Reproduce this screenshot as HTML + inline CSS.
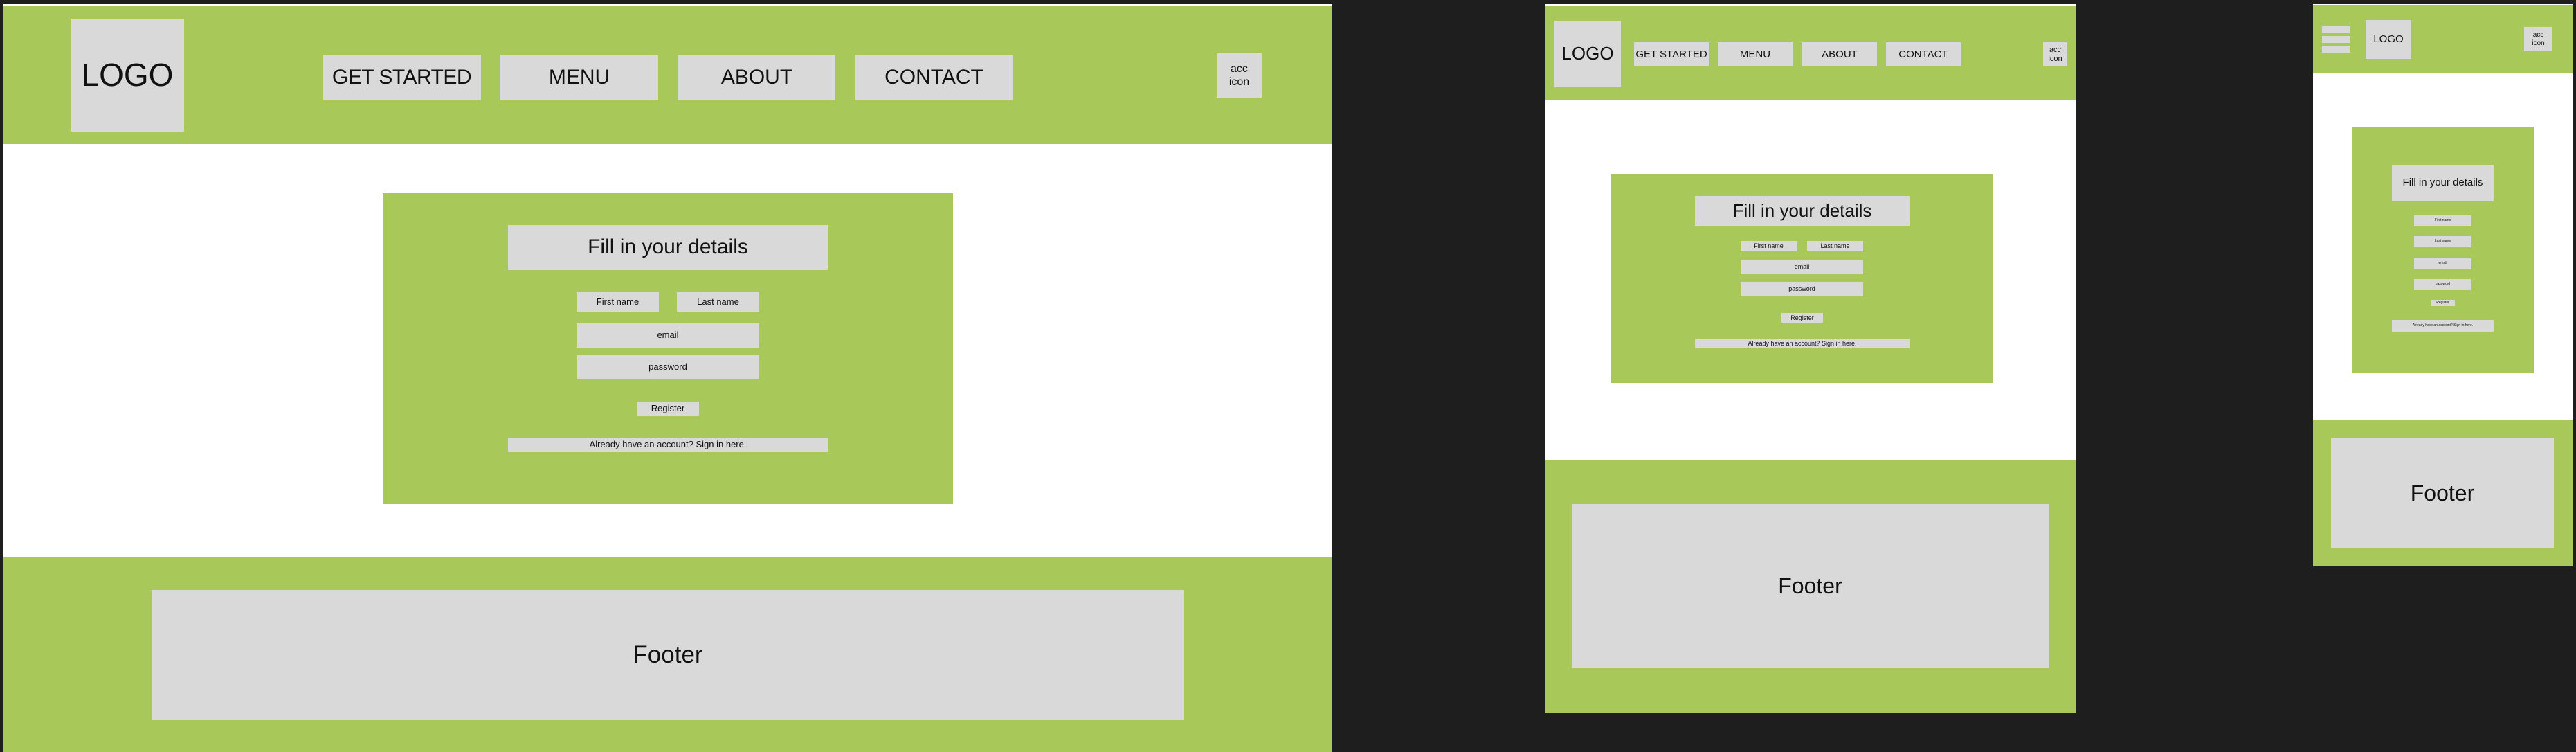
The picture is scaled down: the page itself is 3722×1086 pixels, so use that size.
<!DOCTYPE html>
<html><head><meta charset="utf-8"><style>
*{margin:0;padding:0;box-sizing:border-box}
body{width:3722px;height:1086px;background:#1e1e1e;position:relative;overflow:hidden;font-family:"Liberation Sans",sans-serif;color:#111}
.a{position:absolute}
.g{background:#a8c95a}
.w{background:#fff}
.b{position:absolute;background:#d9d9d9;display:flex;align-items:center;justify-content:center;text-align:center;line-height:1.15;white-space:nowrap}
</style></head><body>
<!-- Frame 1 -->
<div class="a w" style="left:5px;top:6px;width:1920px;height:1080px"></div>
<div class="a g" style="left:5px;top:8px;width:1920px;height:200px"></div>
<div class="b" style="left:102px;top:27px;width:164px;height:163px;font-size:46px">LOGO</div>
<div class="b" style="left:466px;top:80px;width:229px;height:65px;font-size:30px;letter-spacing:-0.5px">GET STARTED</div>
<div class="b" style="left:723px;top:80px;width:228px;height:65px;font-size:30px">MENU</div>
<div class="b" style="left:980px;top:80px;width:227px;height:65px;font-size:30px">ABOUT</div>
<div class="b" style="left:1236px;top:80px;width:227px;height:65px;font-size:30px">CONTACT</div>
<div class="b" style="left:1758px;top:77px;width:65px;height:65px;font-size:16px">acc<br>icon</div>
<div class="a g" style="left:553px;top:279px;width:824px;height:449px"></div>
<div class="b" style="left:734px;top:325px;width:462px;height:65px;font-size:30px">Fill in your details</div>
<div class="b" style="left:833px;top:422px;width:119px;height:29px;font-size:13px">First name</div>
<div class="b" style="left:978px;top:422px;width:119px;height:29px;font-size:13px">Last name</div>
<div class="b" style="left:833px;top:467px;width:264px;height:35px;font-size:13px">email</div>
<div class="b" style="left:833px;top:513px;width:264px;height:35px;font-size:13px">password</div>
<div class="b" style="left:920px;top:580px;width:90px;height:21px;font-size:13px">Register</div>
<div class="b" style="left:734px;top:632px;width:462px;height:21px;font-size:13px">Already have an account? Sign in here.</div>
<div class="a g" style="left:5px;top:805px;width:1920px;height:281px"></div>
<div class="b" style="left:219px;top:852px;width:1492px;height:188px;font-size:35px">Footer</div>

<!-- Frame 2 -->
<div class="a w" style="left:2232px;top:6px;width:768px;height:1024px"></div>
<div class="a g" style="left:2232px;top:8px;width:768px;height:137px"></div>
<div class="b" style="left:2246px;top:30px;width:96px;height:96px;font-size:26px">LOGO</div>
<div class="b" style="left:2361px;top:61px;width:108px;height:35px;font-size:15px">GET STARTED</div>
<div class="b" style="left:2482px;top:61px;width:108px;height:35px;font-size:15px">MENU</div>
<div class="b" style="left:2604px;top:61px;width:108px;height:35px;font-size:15px">ABOUT</div>
<div class="b" style="left:2725px;top:61px;width:108px;height:35px;font-size:15px">CONTACT</div>
<div class="b" style="left:2952px;top:61px;width:35px;height:35px;font-size:11px">acc<br>icon</div>
<div class="a g" style="left:2328px;top:252px;width:552px;height:301px"></div>
<div class="b" style="left:2449px;top:283px;width:310px;height:43px;font-size:26px">Fill in your details</div>
<div class="b" style="left:2515px;top:348px;width:81px;height:15px;font-size:9px">First name</div>
<div class="b" style="left:2611px;top:348px;width:81px;height:15px;font-size:9px">Last name</div>
<div class="b" style="left:2515px;top:375px;width:177px;height:21px;font-size:9px">email</div>
<div class="b" style="left:2515px;top:407px;width:177px;height:21px;font-size:9px">password</div>
<div class="b" style="left:2574px;top:452px;width:60px;height:14px;font-size:9px">Register</div>
<div class="b" style="left:2449px;top:489px;width:310px;height:14px;font-size:9px">Already have an account? Sign in here.</div>
<div class="a g" style="left:2232px;top:664px;width:768px;height:366px"></div>
<div class="b" style="left:2271px;top:728px;width:689px;height:237px;font-size:32px">Footer</div>

<!-- Frame 3 -->
<div class="a w" style="left:3342px;top:6px;width:375px;height:812px"></div>
<div class="a g" style="left:3342px;top:7px;width:375px;height:99px"></div>
<div class="a" style="left:3355px;top:38px;width:41px;height:10px;background:#d9d9d9"></div>
<div class="a" style="left:3355px;top:52px;width:41px;height:10px;background:#d9d9d9"></div>
<div class="a" style="left:3355px;top:66px;width:41px;height:10px;background:#d9d9d9"></div>
<div class="b" style="left:3418px;top:29px;width:66px;height:56px;font-size:15px">LOGO</div>
<div class="b" style="left:3647px;top:39px;width:41px;height:35px;font-size:10px">acc<br>icon</div>
<div class="a g" style="left:3398px;top:184px;width:263px;height:355px"></div>
<div class="b" style="left:3456px;top:238px;width:147px;height:52px;font-size:15px">Fill in your details</div>
<div class="b" style="left:3488px;top:311px;width:83px;height:16px;font-size:5px">First name</div>
<div class="b" style="left:3488px;top:341px;width:83px;height:16px;font-size:5px">Last name</div>
<div class="b" style="left:3488px;top:373px;width:83px;height:16px;font-size:5px">email</div>
<div class="b" style="left:3488px;top:403px;width:83px;height:16px;font-size:5px">password</div>
<div class="b" style="left:3512px;top:433px;width:35px;height:9px;font-size:5px">Register</div>
<div class="b" style="left:3456px;top:462px;width:147px;height:17px;font-size:5px">Already have an account? Sign in here.</div>
<div class="a g" style="left:3342px;top:606px;width:375px;height:212px"></div>
<div class="b" style="left:3368px;top:632px;width:322px;height:160px;font-size:32px">Footer</div>
</body></html>
